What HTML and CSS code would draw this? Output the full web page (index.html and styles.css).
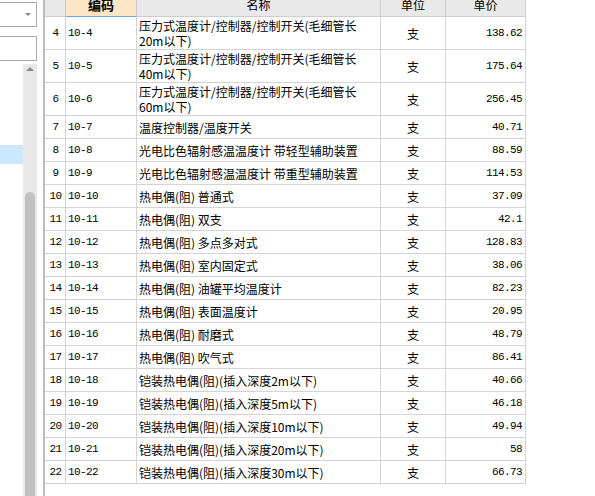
FILE: index.html
```html
<!DOCTYPE html>
<html lang="zh-CN">
<head>
<meta charset="utf-8">
<title>定额列表</title>
<link rel="stylesheet" href="styles.css">
</head>
<body>
<div class="page">
  <aside class="side">
    <div class="combo"><span class="combo-arrow"></span></div>
    <div class="textbox"></div>
    <div class="list">
      <div class="items"><div class="sel"></div></div>
      <div class="scroll">
        <span class="scroll-up"></span>
        <div class="thumb"></div>
      </div>
    </div>
  </aside>
  <div class="gap"></div>
  <main class="main">
    <div class="grid">
      <div class="h"></div>
      <div class="h h-active"><b>编码</b></div>
      <div class="h">名称</div>
      <div class="h">单位</div>
      <div class="h">单价</div>

      <div class="c no">4</div><div class="c code">10-4</div><div class="c name">压力式温度计/控制器/控制开关(毛细管长<br>20m以下)</div><div class="c unit">支</div><div class="c price">138.62</div>
      <div class="c no">5</div><div class="c code">10-5</div><div class="c name">压力式温度计/控制器/控制开关(毛细管长<br>40m以下)</div><div class="c unit">支</div><div class="c price">175.64</div>
      <div class="c no">6</div><div class="c code">10-6</div><div class="c name">压力式温度计/控制器/控制开关(毛细管长<br>60m以下)</div><div class="c unit">支</div><div class="c price">256.45</div>
      <div class="c no">7</div><div class="c code">10-7</div><div class="c name">温度控制器/温度开关</div><div class="c unit">支</div><div class="c price">40.71</div>
      <div class="c no">8</div><div class="c code">10-8</div><div class="c name">光电比色辐射感温温度计 带轻型辅助装置</div><div class="c unit">支</div><div class="c price">88.59</div>
      <div class="c no">9</div><div class="c code">10-9</div><div class="c name">光电比色辐射感温温度计 带重型辅助装置</div><div class="c unit">支</div><div class="c price">114.53</div>
      <div class="c no">10</div><div class="c code">10-10</div><div class="c name">热电偶(阻) 普通式</div><div class="c unit">支</div><div class="c price">37.09</div>
      <div class="c no">11</div><div class="c code">10-11</div><div class="c name">热电偶(阻) 双支</div><div class="c unit">支</div><div class="c price">42.1</div>
      <div class="c no">12</div><div class="c code">10-12</div><div class="c name">热电偶(阻) 多点多对式</div><div class="c unit">支</div><div class="c price">128.83</div>
      <div class="c no">13</div><div class="c code">10-13</div><div class="c name">热电偶(阻) 室内固定式</div><div class="c unit">支</div><div class="c price">38.06</div>
      <div class="c no">14</div><div class="c code">10-14</div><div class="c name">热电偶(阻) 油罐平均温度计</div><div class="c unit">支</div><div class="c price">82.23</div>
      <div class="c no">15</div><div class="c code">10-15</div><div class="c name">热电偶(阻) 表面温度计</div><div class="c unit">支</div><div class="c price">20.95</div>
      <div class="c no">16</div><div class="c code">10-16</div><div class="c name">热电偶(阻) 耐磨式</div><div class="c unit">支</div><div class="c price">48.79</div>
      <div class="c no">17</div><div class="c code">10-17</div><div class="c name">热电偶(阻) 吹气式</div><div class="c unit">支</div><div class="c price">86.41</div>
      <div class="c no">18</div><div class="c code">10-18</div><div class="c name">铠装热电偶(阻)(插入深度2m以下)</div><div class="c unit">支</div><div class="c price">40.66</div>
      <div class="c no">19</div><div class="c code">10-19</div><div class="c name">铠装热电偶(阻)(插入深度5m以下)</div><div class="c unit">支</div><div class="c price">46.18</div>
      <div class="c no">20</div><div class="c code">10-20</div><div class="c name">铠装热电偶(阻)(插入深度10m以下)</div><div class="c unit">支</div><div class="c price">49.94</div>
      <div class="c no">21</div><div class="c code">10-21</div><div class="c name">铠装热电偶(阻)(插入深度20m以下)</div><div class="c unit">支</div><div class="c price">58</div>
      <div class="c no">22</div><div class="c code">10-22</div><div class="c name">铠装热电偶(阻)(插入深度30m以下)</div><div class="c unit">支</div><div class="c price">66.73</div>
    </div>
  </main>
</div>
</body>
</html>
```

FILE: styles.css
```css
html, body {
  margin: 0;
  padding: 0;
  background: #ffffff;
}
body {
  width: 595px;
  height: 496px;
  overflow: hidden;
  font-family: "Noto Sans CJK SC", "Liberation Sans", sans-serif;
  font-size: 12px;
  color: #000;
}
.page {
  display: flex;
  height: 496px;
}

/* left panel */
.side {
  width: 37px;
  display: flex;
  flex-direction: column;
  flex: none;
}
.combo {
  margin-top: 2px;
  height: 25px;
  box-sizing: border-box;
  border: 1px solid #ababab;
  border-left: none;
  display: flex;
  align-items: center;
  justify-content: flex-end;
  padding-right: 5px;
}
.combo-arrow {
  width: 0;
  height: 0;
  border-left: 3px solid transparent;
  border-right: 3px solid transparent;
  border-top: 3px solid #858585;
}
.textbox {
  margin-top: 9px;
  height: 25px;
  box-sizing: border-box;
  border: 1px solid #ababab;
  border-left: none;
}
.list {
  flex: 1;
  display: flex;
  margin-top: 3px;
}
.items {
  width: 23px;
}
.sel {
  margin-top: 81px;
  height: 19px;
  background: #cce8ff;
}
.scroll {
  width: 14px;
  background: #e8e8e8;
  display: flex;
  flex-direction: column;
  align-items: center;
}
.scroll-up {
  margin-top: 3px;
  width: 0;
  height: 0;
  border-left: 4px solid transparent;
  border-right: 4px solid transparent;
  border-bottom: 4px solid #8a8a8a;
}
.thumb {
  margin-top: 121px;
  width: 10px;
  flex: 1;
  background: #c1c1c1;
  border-radius: 5px 5px 0 0;
}

.gap {
  width: 6px;
  flex: none;
}

/* main grid */
.main {
  flex: 1;
  border-left: 2px solid #bdbdbd;
}
.grid {
  display: grid;
  grid-template-columns: 21px 71px 244px 65px 80px;
  grid-template-rows: 17px 33px 33px 33px;
  grid-auto-rows: 23px;
  width: 481px;
}
.h {
  box-sizing: border-box;
  background: #e9e9e9;
  border-right: 1px solid #cdcdcd;
  border-bottom: 1px solid #cdcdcd;
  text-align: center;
  line-height: 10px;
  font-size: 12px;
  overflow: hidden;
  white-space: nowrap;
}
.h-active {
  background: #fde6c6;
  border-bottom: 1px solid #6aa5e0;
}
.h b {
  font-weight: 700;
  font-size: 13px;
}
.c {
  box-sizing: border-box;
  border-right: 1px solid #d4d4d4;
  border-bottom: 1px solid #d4d4d4;
  display: flex;
  align-items: center;
  white-space: nowrap;
  overflow: hidden;
}
.no {
  justify-content: center;
  font-family: "Liberation Mono", monospace;
  font-size: 11px;
  letter-spacing: -0.6px;
  padding-left: 1px;
}
.code {
  padding-left: 2px;
  font-family: "Liberation Mono", monospace;
  font-size: 11px;
  letter-spacing: -0.6px;
}
.name {
  padding-left: 2px;
  line-height: 15px;
}
.unit {
  justify-content: center;
}
.price {
  justify-content: flex-end;
  padding-right: 3px;
  font-family: "Liberation Mono", monospace;
  font-size: 11px;
  letter-spacing: -0.6px;
}
```
